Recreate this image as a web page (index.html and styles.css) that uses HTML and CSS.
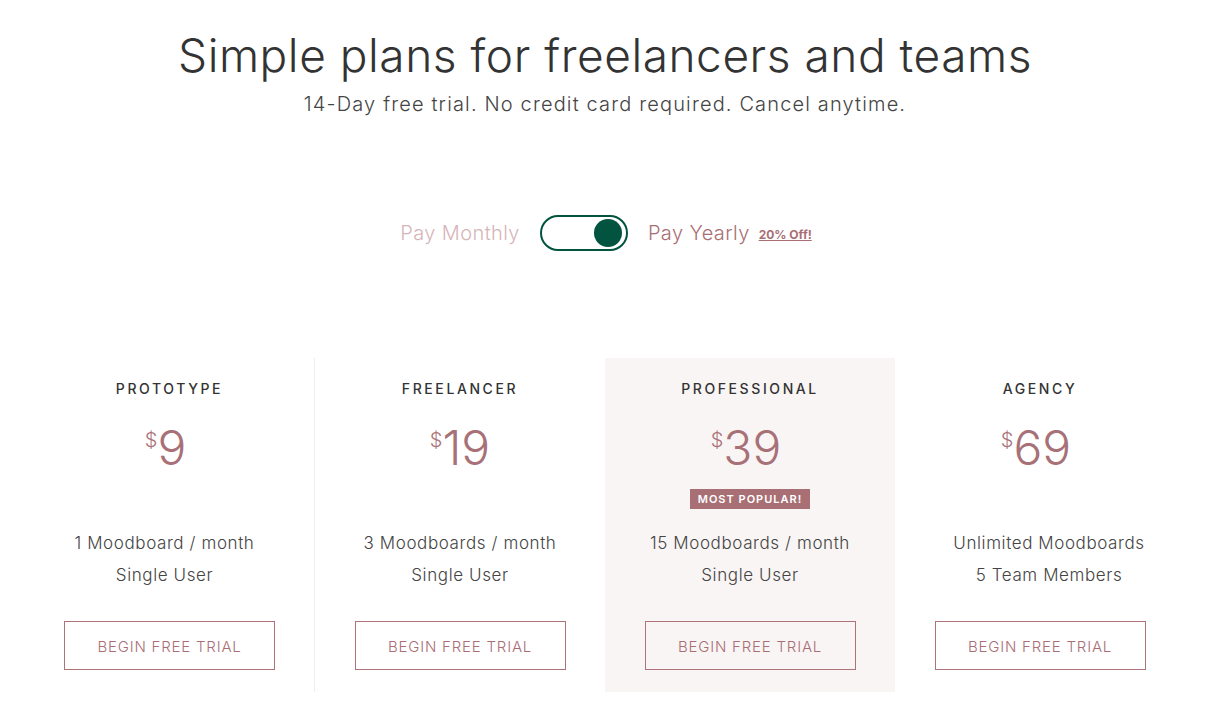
FILE: index.html
```html
<!DOCTYPE html>
<html lang="en">
<head>
<meta charset="utf-8">
<title>Pricing</title>
<link rel="stylesheet" href="styles.css">
</head>
<body>
<div class="page">
  <header class="hero">
    <h1 class="title">Simple plans for freelancers and teams</h1>
    <p class="subtitle">14-Day free trial. No credit card required. Cancel anytime.</p>
  </header>

  <div class="billing">
    <span class="billing-label billing-label--off">Pay Monthly</span>
    <span class="switch"><span class="switch-knob"></span></span>
    <span class="billing-label billing-label--on">Pay Yearly</span>
    <a class="discount" href="#">20% Off!</a>
  </div>

  <section class="plans">
    <div class="plan plan--divided">
      <h2 class="plan-name">PROTOTYPE</h2>
      <div class="price price--left"><span class="currency">$</span><span class="amount">9</span></div>
      <div class="badge-slot"></div>
      <ul class="features features--left"><li>1 Moodboard / month</li><li>Single User</li></ul>
      <a class="cta" href="#">BEGIN FREE TRIAL</a>
    </div>
    <div class="plan">
      <h2 class="plan-name">FREELANCER</h2>
      <div class="price"><span class="currency">$</span><span class="amount">19</span></div>
      <div class="badge-slot"></div>
      <ul class="features"><li>3 Moodboards / month</li><li>Single User</li></ul>
      <a class="cta" href="#">BEGIN FREE TRIAL</a>
    </div>
    <div class="plan plan--featured">
      <h2 class="plan-name">PROFESSIONAL</h2>
      <div class="price price--left"><span class="currency">$</span><span class="amount">39</span></div>
      <div class="badge-slot"><span class="badge">MOST POPULAR!</span></div>
      <ul class="features"><li>15 Moodboards / month</li><li>Single User</li></ul>
      <a class="cta" href="#">BEGIN FREE TRIAL</a>
    </div>
    <div class="plan">
      <h2 class="plan-name">AGENCY</h2>
      <div class="price price--left"><span class="currency">$</span><span class="amount">69</span></div>
      <div class="badge-slot"></div>
      <ul class="features features--right"><li>Unlimited Moodboards</li><li>5 Team Members</li></ul>
      <a class="cta" href="#">BEGIN FREE TRIAL</a>
    </div>
  </section>
</div>
</body>
</html>
```

FILE: styles.css
```css
* { box-sizing: border-box; }

html, body {
  margin: 0;
  padding: 0;
  background: #ffffff;
}

body {
  font-family: "Inter", "Noto Sans", "Liberation Sans", sans-serif;
  color: #3a3a3a;
}

.page {
  width: 1210px;
}

.hero {
  text-align: center;
  padding-top: 27px;
}

.title {
  margin: 0;
  font-size: 46px;
  line-height: 56px;
  font-weight: 300;
  color: #333333;
  letter-spacing: 0.55px;
}

.subtitle {
  margin: 7px 0 0;
  font-size: 20px;
  line-height: 28px;
  font-weight: 300;
  color: #444444;
  letter-spacing: 1.15px;
}

.billing {
  margin-top: 97px;
  display: flex;
  justify-content: center;
  align-items: center;
  height: 36px;
  padding-left: 2px;
}

.billing-label {
  font-size: 20px;
  font-weight: 300;
  letter-spacing: 0.4px;
}

.billing-label--off { color: #d6b5b8; }
.billing-label--on { color: #a86e74; }

.switch {
  margin: 0 20px;
  width: 88px;
  height: 36px;
  border: 2px solid #02543f;
  border-radius: 18px;
  display: flex;
  align-items: center;
  justify-content: flex-end;
  padding-right: 4px;
}

.switch-knob {
  width: 28px;
  height: 28px;
  border-radius: 50%;
  background: #02533f;
}

.discount {
  margin-left: 9px;
  font-size: 12px;
  font-weight: 700;
  color: #a86e74;
  text-decoration: underline;
  position: relative;
  top: 1px;
}

.plans {
  margin: 107px 25px 0;
  display: grid;
  grid-template-columns: repeat(4, 290px);
}

.plan {
  text-align: center;
  padding: 21px 0 22px;
  display: flex;
  flex-direction: column;
  align-items: center;
}

.plan--divided { border-right: 1px solid #eeeeee; }

.plan--featured { background: #f9f5f4; }

.plan-name {
  margin: 0;
  font-size: 14px;
  line-height: 20px;
  font-weight: 500;
  letter-spacing: 2.6px;
  color: #333333;
}

.price {
  margin-top: 21px;
  height: 56px;
  display: flex;
  justify-content: center;
  align-items: flex-start;
  color: #a87077;
}

.price--left { padding-right: 8px; }

.currency {
  font-size: 20px;
  line-height: 20px;
  font-weight: 300;
  margin-top: 10px;
  margin-right: 0;
}

.amount {
  font-size: 48px;
  line-height: 56px;
  font-weight: 300;
}

.badge-slot {
  margin-top: 13px;
  height: 20px;
  display: flex;
  justify-content: center;
}

.badge {
  display: block;
  width: 120px;
  height: 20px;
  line-height: 20px;
  background: #a86f74;
  color: #ffffff;
  font-size: 11px;
  font-weight: 600;
  letter-spacing: 1px;
}

.features {
  list-style: none;
  margin: 18px 0 0;
  padding: 0;
}

.features--left { padding-right: 10px; }
.features--right { padding-left: 18px; }

.features li {
  font-size: 17px;
  line-height: 32px;
  font-weight: 300;
  color: #444444;
  letter-spacing: 0.6px;
}

.cta {
  margin-top: 30px;
  width: 211px;
  height: 49px;
  border: 1px solid #ad7379;
  display: flex;
  align-items: center;
  justify-content: center;
  padding-top: 2px;
  font-size: 15px;
  font-weight: 300;
  color: #a86e74;
  text-decoration: none;
  letter-spacing: 0.8px;
}
```
